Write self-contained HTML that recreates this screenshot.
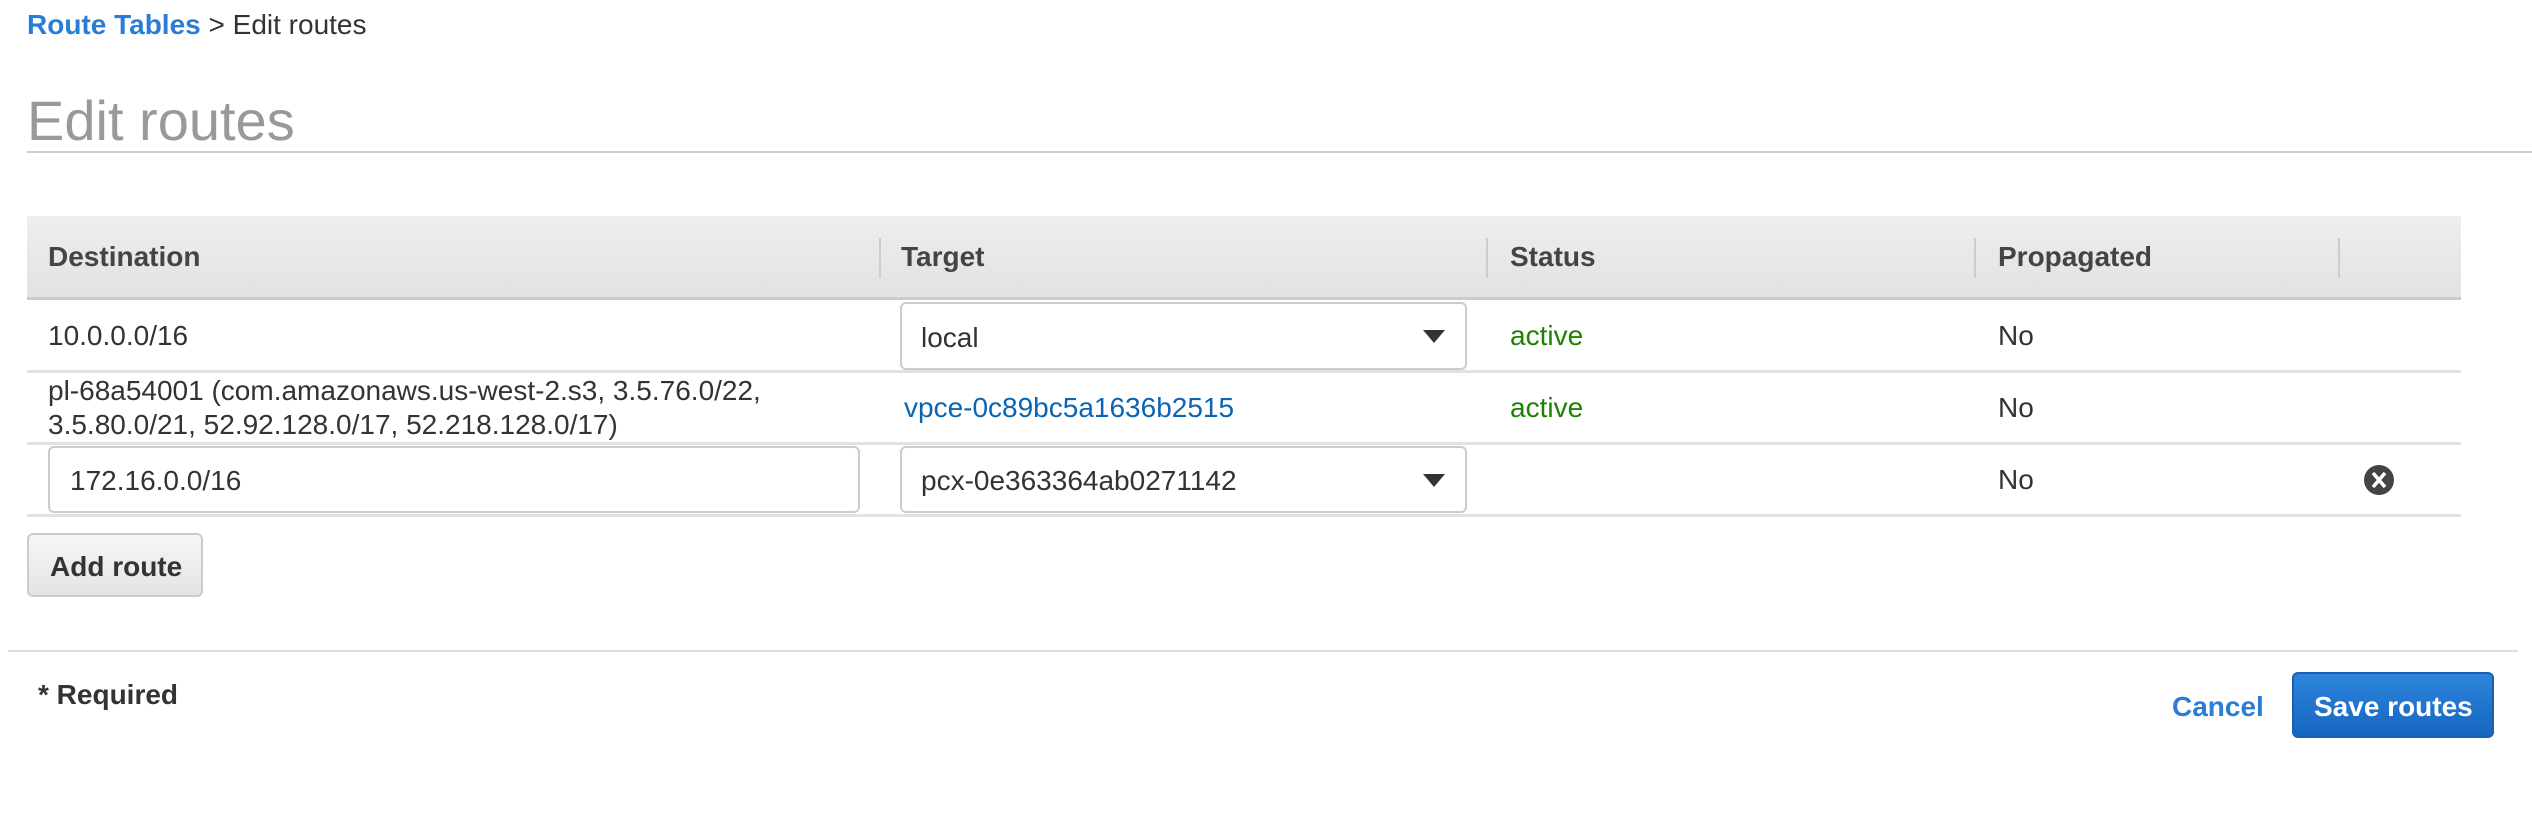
<!DOCTYPE html>
<html><head><meta charset="utf-8"><style>
body{margin:0;width:2532px;height:822px;background:#fff;font-family:"Liberation Sans",Arial,sans-serif;color:#333;position:relative;overflow:hidden}
.a{position:absolute;white-space:nowrap}
.t{font-size:28px}
.hdr{position:absolute;left:27px;top:216px;width:2434px;height:81px;background:linear-gradient(#eee,#e2e2e2);border-bottom:3px solid #ccc}
.hd{position:absolute;top:241px;font-size:28px;font-weight:bold;color:#444}
.dv{position:absolute;top:238px;width:2px;height:40px;background:#ccc}
.ln{position:absolute;left:27px;width:2434px;height:3px;background:#e2e2e2}
.box{position:absolute;border:2px solid #ccc;border-radius:6px;background:#fff;box-sizing:border-box}
.arr{position:absolute;right:20px;top:26px;width:0;height:0;border-left:11px solid transparent;border-right:11px solid transparent;border-top:13px solid #333}
.g{color:#1d8102}
</style></head><body>
<div class="a t" style="left:27px;top:9px"><span style="color:#2a7dd6;font-weight:bold">Route Tables</span> &gt; Edit routes</div>
<div class="a" style="left:27px;top:88px;font-size:56px;color:#999">Edit routes</div>
<div style="position:absolute;left:27px;top:151px;width:2505px;height:2px;background:#ccc"></div>
<div class="hdr"></div>
<div class="hd" style="left:48px">Destination</div>
<div class="dv" style="left:879px"></div>
<div class="hd" style="left:901px">Target</div>
<div class="dv" style="left:1486px"></div>
<div class="hd" style="left:1510px">Status</div>
<div class="dv" style="left:1974px"></div>
<div class="hd" style="left:1998px">Propagated</div>
<div class="dv" style="left:2338px"></div>

<div class="a t" style="left:48px;top:320px">10.0.0.0/16</div>
<div class="box" style="left:900px;top:302px;width:567px;height:68px"><span class="a t" style="left:19px;top:18px">local</span><div class="arr"></div></div>
<div class="a t g" style="left:1510px;top:320px">active</div>
<div class="a t" style="left:1998px;top:320px">No</div>
<div class="ln" style="top:370px"></div>

<div class="a t" style="left:48px;top:374px;line-height:34px">pl-68a54001 (com.amazonaws.us-west-2.s3, 3.5.76.0/22,<br>3.5.80.0/21, 52.92.128.0/17, 52.218.128.0/17)</div>
<div class="a t" style="left:904px;top:392px;color:#0a64b5">vpce-0c89bc5a1636b2515</div>
<div class="a t g" style="left:1510px;top:392px">active</div>
<div class="a t" style="left:1998px;top:392px">No</div>
<div class="ln" style="top:442px"></div>

<div class="box" style="left:48px;top:446px;width:812px;height:67px"><span class="a t" style="left:20px;top:17px">172.16.0.0/16</span></div>
<div class="box" style="left:900px;top:446px;width:567px;height:67px"><span class="a t" style="left:19px;top:17px">pcx-0e363364ab0271142</span><div class="arr"></div></div>
<div class="a t" style="left:1998px;top:464px">No</div>
<svg class="a" style="left:2363px;top:464px" width="32" height="32" viewBox="0 0 32 32"><circle cx="16" cy="16" r="15" fill="#444"/><path d="M10 9L22 23M22 9L10 23" stroke="#fff" stroke-width="3.5"/></svg>
<div class="ln" style="top:514px"></div>

<div class="box" style="left:27px;top:533px;width:176px;height:64px;background:linear-gradient(#f6f6f6,#e4e4e4);border-color:#ccc"><span class="a t" style="left:21px;top:16px;font-weight:bold;color:#333">Add route</span></div>

<div style="position:absolute;left:8px;top:650px;width:2510px;height:2px;background:#ddd"></div>
<div class="a t" style="left:38px;top:679px;font-weight:bold">* Required</div>
<div class="a t" style="left:2172px;top:691px;font-weight:bold;color:#2a7dd6">Cancel</div>
<div class="box" style="left:2292px;top:672px;width:202px;height:66px;background:linear-gradient(#2e84dc,#1566c0);border-color:#1a5fb0"><span class="a t" style="left:20px;top:17px;font-weight:bold;color:#fff">Save routes</span></div>
</body></html>
